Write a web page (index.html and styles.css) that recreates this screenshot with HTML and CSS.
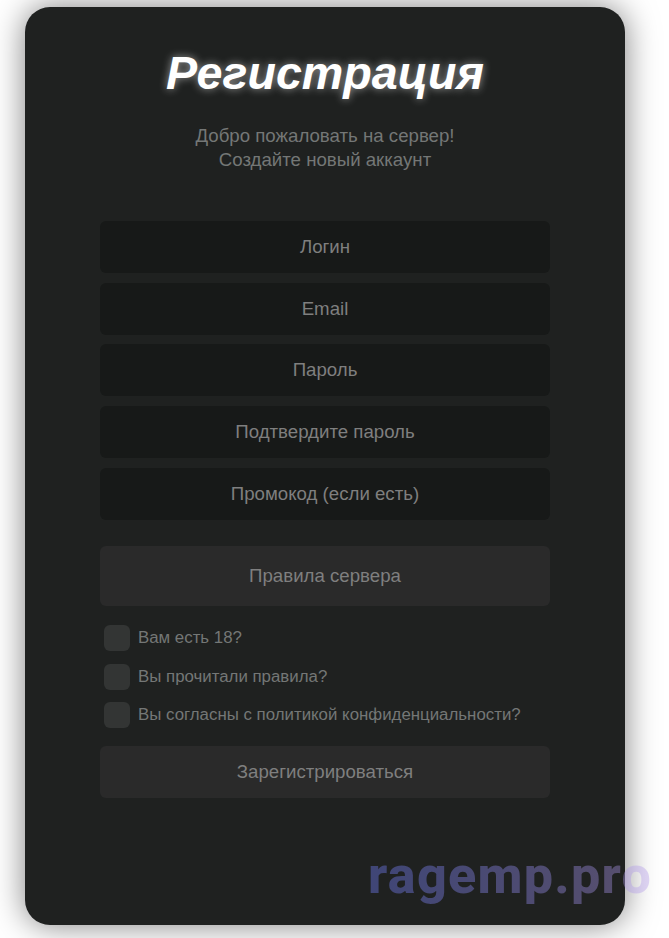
FILE: index.html
```html
<!DOCTYPE html>
<html lang="ru">
<head>
    <meta charset="UTF-8">
    <meta name="viewport" content="width=device-width, initial-scale=1.0">
    <title>Регистрация</title>

    <link rel="stylesheet" href="styles.css">
</head>
<body>
    <div class="register-card">
        <h1>Регистрация</h1>
        <p class="subtitle">Добро пожаловать на сервер!<br>Создайте новый аккаунт</p>

        <div class="fields">
            <input type="text" placeholder="Логин">
            <input type="text" placeholder="Email">
            <input type="password" placeholder="Пароль">
            <input type="password" placeholder="Подтвердите пароль">
            <input type="text" placeholder="Промокод (если есть)">
        </div>

        <button class="btn-rules">Правила сервера</button>

        <div class="checks">
            <label class="check"><span class="box"></span>Вам есть 18?</label>
            <label class="check"><span class="box"></span>Вы прочитали правила?</label>
            <label class="check"><span class="box"></span>Вы согласны с политикой конфиденциальности?</label>
        </div>

        <button class="btn-register">Зарегистрироваться</button>
    </div>

    <div class="watermark">ragemp.pro</div>
</body>
</html>
```

FILE: styles.css
```css
body {
    font-family: "Liberation Sans", Arial, sans-serif;
    background-color: #fff;
    margin: 0;
    height: 938px;
    overflow: hidden;
    position: relative;
}
.register-card {
    box-sizing: border-box;
    width: 600px;
    height: 918px;
    margin: 7px 0 0 25px;
    padding: 39px 75px 0;
    background-color: #1f2120;
    border-radius: 25px;
    box-shadow: 0 0 32px rgba(0, 0, 0, 0.5);
}
h1 {
    margin: 0;
    color: #fff;
    font-size: 46.67px;
    font-weight: bold;
    font-style: italic;
    line-height: 55px;
    text-align: center;
    text-shadow: 0 0 8px rgba(255, 255, 255, 0.55);
}
.subtitle {
    margin: 23px 0 0;
    color: #747776;
    font-size: 18.67px;
    line-height: 24px;
    text-align: center;
}
.fields {
    display: flex;
    flex-direction: column;
    gap: 9.7px;
    margin-top: 49px;
}
.fields input {
    box-sizing: border-box;
    width: 100%;
    height: 52px;
    border: none;
    border-radius: 6px;
    background-color: #171918;
    font-family: inherit;
    font-size: 18.67px;
    text-align: center;
}
.fields input::placeholder {
    color: #7f7f7f;
    opacity: 1;
}
.btn-rules,
.btn-register {
    display: block;
    width: 100%;
    border: none;
    border-radius: 6px;
    background-color: #2a2a2a;
    color: #7f7f7f;
    font-family: inherit;
    font-size: 18.67px;
}
.btn-rules {
    height: 60px;
    margin-top: 26px;
}
.checks {
    display: flex;
    flex-direction: column;
    gap: 12.5px;
    margin-top: 19.4px;
    padding-left: 4px;
}
.check {
    display: flex;
    align-items: center;
    gap: 8px;
    color: #747776;
    font-size: 16.85px;
}
.box {
    width: 26px;
    height: 26px;
    border-radius: 6px;
    background-color: #333534;
}
.btn-register {
    height: 52px;
    margin-top: 17.8px;
}
.watermark {
    position: absolute;
    left: 368px;
    top: 846px;
    font-family: Roboto, sans-serif;
    font-size: 52px;
    font-weight: 800;
    letter-spacing: 1.3px;
    line-height: 60px;
    background: linear-gradient(90deg, #7380ff, #b49ae8);
    -webkit-background-clip: text;
    background-clip: text;
    color: transparent;
    opacity: 0.39;
}
```
